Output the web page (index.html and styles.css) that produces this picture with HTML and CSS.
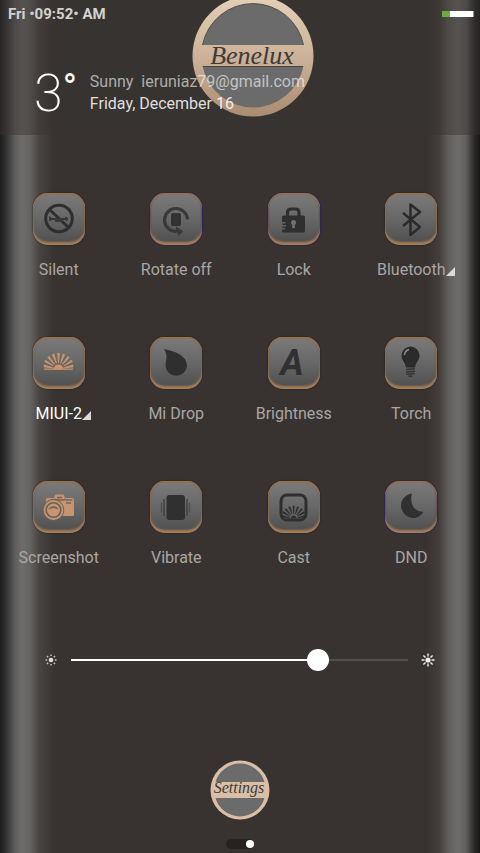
FILE: index.html
```
<!DOCTYPE html>
<html lang="en">
<head>
    <meta charset="UTF-8">
    <meta name="viewport" content="width=device-width, initial-scale=1.0">
    <title>Quick settings</title>
    <link rel="stylesheet" href="styles.css">
</head>
<body>

    <header class="header">
        <svg class="emblem" viewBox="0 0 122 122" aria-label="Benelux">
            <defs>
                <linearGradient id="gold" x1="0" y1="0" x2="0" y2="1">
                    <stop offset="0" stop-color="#e5d1b8"/>
                    <stop offset="0.5" stop-color="#cbb298"/>
                    <stop offset="1" stop-color="#a98c72"/>
                </linearGradient>
            </defs>
            <circle cx="61" cy="61" r="60.5" fill="url(#gold)"/>
            <path d="M10.500 50a51.500 51.500 0 0 1 101 0z" fill="#6b6b6b"/>
            <path d="M10.500 71a51.500 51.500 0 0 0 101 0z" fill="#6b6b6b"/>
            <path d="M10.500 50a51.500 51.500 0 0 1 101 0" fill="none" stroke="#55504c"/>
            <path d="M11 71.500h100" stroke="#4a4644"/>
            <text class="script" x="60" y="69" text-anchor="middle" font-size="26">Benelux</text>
        </svg>

        <div class="status">
            <span>Fri •09:52• AM</span>
            <span class="battery"></span>
        </div>

        <div class="weather">
            <div class="temp">3<span>°</span></div>
            <div class="info">
                <div class="condition">Sunny&nbsp; ieruniaz79@gmail.com</div>
                <div class="date">Friday, December 16</div>
            </div>
        </div>
    </header>

    <main>
        <div class="toggles">
            <button class="toggle">
                <svg class="tile" viewBox="0 0 52 52">
                    <circle cx="26" cy="25.500" r="13.300" fill="none" stroke="#2e2e2e" stroke-width="3"/>
                    <path d="M16 16l20 19" stroke="#2e2e2e" stroke-width="3"/>
                    <path d="M16 23l3 2h13c0-1.500 3-1.500 3 0.800s-2 2.200-3 1.200h-2v2h-8V27h-3l-3 1.500z" fill="#383838"/>
                </svg>
                <span class="label">Silent</span>
            </button>
            <button class="toggle">
                <svg class="tile blue" viewBox="0 0 52 52">
                    <path d="M37.500 26.500A11.500 11.500 0 1 0 26 38.500" fill="none" stroke="#383838" stroke-width="3.200"/>
                    <path d="M26 33.500l7 4.800-4.500 4.700-1-3.500-2 .5z" fill="#383838"/>
                    <rect x="21" y="20" width="10" height="13" rx="1.500" fill="#333"/>
                </svg>
                <span class="label">Rotate off</span>
            </button>
            <button class="toggle">
                <svg class="tile blue" viewBox="0 0 52 52">
                    <path d="M19.500 23v-3.500q0-3.500 3.500-3.500h4.500q3.500 0 3.500 3.500V23" fill="none" stroke="#2f2f2f" stroke-width="3.200"/>
                    <path d="M15.500 22.500h20q1.500 0 1.500 1.500v14q0 1.500-1.500 1.500h-20q-1.500 0-1.500-1.500v-1.500h3v-1.500h-2.500v-1.500h3.500V32H14.500v-1.500h3V29H14v-5q0-1.500 1.500-1.500z" fill="#2f2f2f"/>
                    <circle cx="25.500" cy="29.500" r="2.500" fill="#707070"/>
                    <path d="M24.500 30h2l.5 5h-3z" fill="#707070"/>
                </svg>
                <span class="label">Lock</span>
            </button>
            <button class="toggle">
                <svg class="tile" viewBox="0 0 52 52">
                    <path d="M18 20l17 14-9.500 8V11.500l9.500 7.500-17 14" fill="none" stroke="#2b2b2b" stroke-width="2.500" stroke-linejoin="round"/>
                </svg>
                <span class="label more">Bluetooth</span>
            </button>

            <button class="toggle active">
                <svg class="tile" viewBox="0 0 52 52">
                    <g fill="#c8946f">
                        <path d="M20.500 32.500a5 5 0 0 1 10 0z"/>
                        <path d="M11 31.500h29v1.300H11z"/>
                        <g id="rays">
                            <path id="ray" d="M25 26l-.8-10h2.600l-.8 10z"/>
                            <use href="#ray" transform="rotate(20 25.500 32)"/>
                            <use href="#ray" transform="rotate(40 25.500 32)"/>
                            <use href="#ray" transform="rotate(59 25.500 32)"/>
                            <use href="#ray" transform="rotate(78 25.500 32) translate(0 1)"/>
                            <use href="#ray" transform="rotate(-20 25.500 32)"/>
                            <use href="#ray" transform="rotate(-40 25.500 32)"/>
                            <use href="#ray" transform="rotate(-59 25.500 32)"/>
                            <use href="#ray" transform="rotate(-78 25.500 32) translate(0 1)"/>
                        </g>
                    </g>
                </svg>
                <span class="label more">MIUI-2</span>
            </button>
            <button class="toggle">
                <svg class="tile" viewBox="0 0 52 52">
                    <path d="M14 12c8 2 23 5 23 17a10.800 10.800 0 0 1-21.500 0c0-6 3-10-1.500-17z" fill="#2f2f2f"/>
                </svg>
                <span class="label">Mi Drop</span>
            </button>
            <button class="toggle">
                <svg class="tile" viewBox="0 0 52 52">
                    <text class="auto" x="24" y="38" text-anchor="middle">A</text>
                </svg>
                <span class="label">Brightness</span>
            </button>
            <button class="toggle">
                <svg class="tile" viewBox="0 0 52 52">
                    <path d="M25.500 9.500a9 9 0 0 1 9 9c0 5-3.500 6-4.500 12h-9c-1-6-4.500-7-4.500-12a9 9 0 0 1 9-9z" fill="#2b2b2b"/>
                    <path d="M19.500 18q.5-4.500 4.500-5.500" fill="none" stroke="#8a8a8a" stroke-width="1.500"/>
                    <path d="M21 32.500l9-.7M21 35l9-.7M21.500 37.300l8-.7M23.500 39.300l4-.4" stroke="#333" stroke-width="1.500"/>
                </svg>
                <span class="label">Torch</span>
            </button>

            <button class="toggle">
                <svg class="tile" viewBox="0 0 52 52">
                    <path d="M13 22v-3q0-2 2-2h6l1.500-3.500h8L32 17h7q2 0 2 2v14.500q0 1.500-1.500 1.500H28z" fill="#c8946f"/>
                    <path d="M15 20q5-2 8-1.500l3.500.5h4q1-1 3 0h6M24 16.500h5M33 22h5" fill="none" stroke="#6f655d" stroke-width="1.300"/>
                    <circle cx="20.500" cy="29" r="10.700" fill="#69625c"/>
                    <circle cx="20.500" cy="29" r="9" fill="none" stroke="#c8946f" stroke-width="1.800"/>
                    <circle cx="20.500" cy="29" r="6.500" fill="#c8946f"/>
                    <path d="M15.500 28.500a5.500 5.500 0 0 1 10 0q-5-3-10 0z" fill="#69625c"/>
                </svg>
                <span class="label">Screenshot</span>
            </button>
            <button class="toggle">
                <svg class="tile" viewBox="0 0 52 52">
                    <rect x="16.500" y="14" width="18.500" height="25" rx="3" fill="#303030"/>
                    <path d="M14 18v17M37 18v17" stroke="#3b3b3b" stroke-width="1.300"/>
                    <path d="M11.500 21.500v10M39.500 21.500v10" stroke="#4a4a4a" stroke-width="1.300"/>
                </svg>
                <span class="label">Vibrate</span>
            </button>
            <button class="toggle">
                <svg class="tile" viewBox="0 0 52 52">
                    <rect x="13" y="14" width="25" height="25" rx="6" fill="none" stroke="#2e2e2e" stroke-width="3"/>
                    <g fill="#2e2e2e" transform="translate(5.300 12) scale(.8)">
                        <path d="M22 32a3.500 3.500 0 0 1 7 0z"/>
                        <use href="#rays"/>
                    </g>
                </svg>
                <span class="label">Cast</span>
            </button>
            <button class="toggle">
                <svg class="tile blue" viewBox="0 0 52 52">
                    <path d="M27 12.500c-2.500 9 1 18.500 11.500 18.200C36 35 32.500 37 28.500 37A12.500 12.500 0 0 1 16 24.500c0-6 4.500-11 11-12z" fill="#303030"/>
                </svg>
                <span class="label">DND</span>
            </button>
        </div>

        <div class="brightness">
            <svg class="sun" viewBox="0 0 14 14" fill="#ddd">
                <circle cx="7" cy="7" r="2.300"/>
                <path d="M7 1.500v1.600M7 10.900v1.600M1.500 7h1.600M10.900 7h1.600M3 3l1.200 1.200M9.800 9.800L11 11M3 11l1.200-1.200M9.800 4.200L11 3" stroke="#ccc" stroke-width="1.400"/>
            </svg>
            <input type="range" min="0" max="100" value="75" aria-label="Brightness level">
            <svg class="sun" viewBox="0 0 14 14" fill="#eee">
                <circle cx="7" cy="7" r="2.600"/>
                <path d="M7 .5v3M7 10.500v3M.5 7h3M10.500 7h3M2.400 2.400l2.100 2.100M9.500 9.500l2.100 2.100M2.400 11.600l2.100-2.100M9.500 4.500l2.100-2.100" stroke="#eee" stroke-width="1.400"/>
            </svg>
        </div>
    </main>

    <footer class="footer">
        <button class="settings" aria-label="Settings">
            <svg viewBox="0 0 60 60">
                <circle cx="30" cy="30" r="29.500" fill="#d9bfa6"/>
                <path d="M5.500 22a25.500 25.500 0 0 1 49 0z" fill="#6b6b6b"/>
                <path d="M5.500 38a25.500 25.500 0 0 0 49 0z" fill="#6b6b6b"/>
                <text class="script" x="29" y="33" text-anchor="middle" font-size="16">Settings</text>
            </svg>
        </button>
        <div class="pager"><span></span></div>
    </footer>

</body>
</html>
```
FILE: styles.css
```
* {
    box-sizing: border-box;
}

body {
    margin: 0;
    min-height: 100vh;
    display: flex;
    flex-direction: column;
    font-family: Roboto, sans-serif;
    color: #fff;
    background:
        linear-gradient(to right, #1d1c1c 0, #333232 6px, #5f5e5d 15px, #6e6d6b 22px, #656361 30px, #494542 39px, rgba(56, 51, 48, 0) 54px),
        linear-gradient(to left, #171616 0, #2c2a2a 6px, #605f5e 14px, #6e6d6b 22px, #605e5c 32px, #433d3b 41px, rgba(56, 51, 48, 0) 54px),
        #383330;
}

button {
    padding: 0;
    border: none;
    background: none;
    font-family: inherit;
    cursor: pointer;
}

.header {
    position: relative;
    height: 135px;
    background-color: rgba(56, 51, 48, 0.45);
}

.emblem {
    position: absolute;
    top: -5px;
    left: calc(50% + 13px);
    width: 122px;
    height: 122px;
    transform: translateX(-50%);
}

.script {
    font-family: "Liberation Serif", serif;
    font-style: italic;
    fill: #3e3a38;
}

.status {
    position: relative;
    display: flex;
    align-items: center;
    justify-content: space-between;
    height: 28px;
    padding: 0 6px 0 8px;
    font-size: 15px;
    font-weight: 700;
    color: #d4d2d1;
}

.battery {
    width: 32px;
    height: 6px;
    border-left: 8px solid #6cab3c;
    border-right: 1px solid #6cab3c;
    background-color: #fff;
}

.weather {
    position: relative;
    display: flex;
    align-items: center;
    gap: 13px;
    padding: 34px 0 0 34px;
}

.temp {
    font-size: 52px;
    line-height: 64px;
    font-weight: 200;
}

.temp span {
    font-weight: 400;
    font-size: 38px;
    line-height: 0;
    vertical-align: 10px;
}

.info {
    font-size: 16px;
    line-height: 22px;
    padding-bottom: 2px;
    white-space: nowrap;
}

.condition {
    color: rgba(255, 255, 255, 0.6);
}

.date {
    color: rgba(255, 255, 255, 0.85);
}

.toggles {
    display: grid;
    grid-template-columns: repeat(4, 1fr);
    row-gap: 57px;
    padding: 58px 10px 0 0;
}

.toggle {
    display: flex;
    flex-direction: column;
    align-items: center;
    gap: 15px;
    color: #a9a6a4;
}

.toggle.active {
    color: #fff;
}

.tile {
    width: 52px;
    height: 52px;
    border-radius: 15px;
    background: linear-gradient(#7b7b7b, #676767 50%, #4d4d4d);
    box-shadow: inset 0 2px 1px #94714f, inset 0 -3px 2px #a47c58, inset 0 0 1px 1px #76604b, 0 0 2px #1d1b1a;
}

.tile.blue {
    box-shadow: inset 0 2px 1px #94714f, inset 0 -3px 2px #a47c58, inset 0 0 1px 1px #4a3d5a, 0 0 1px 1px #30264f;
}

.auto {
    font-family: Roboto, sans-serif;
    font-size: 36px;
    font-weight: 700;
    font-style: italic;
    fill: #303030;
}

.label {
    position: relative;
    font-size: 16px;
    line-height: 20px;
    white-space: nowrap;
}

/* corner mark for toggles that open a list */
.more::after {
    content: "";
    position: absolute;
    left: 100%;
    bottom: 4px;
    border-left: 9px solid transparent;
    border-bottom: 9px solid #dcdad9;
}

.brightness {
    display: flex;
    align-items: center;
    gap: 13px;
    padding: 81px 45px 0 44px;
}

.sun {
    flex: none;
    width: 14px;
    height: 14px;
}

input[type="range"] {
    -webkit-appearance: none;
    appearance: none;
    flex: 1;
    min-width: 0;
    height: 22px;
    margin: 0;
    background: linear-gradient(to right, #fff 75%, #55504d 75%) center / 100% 2px no-repeat;
}

input[type="range"]::-webkit-slider-thumb {
    -webkit-appearance: none;
    width: 22px;
    height: 22px;
    border-radius: 50%;
    background-color: #fff;
}

.footer {
    display: flex;
    flex-direction: column;
    align-items: center;
    gap: 19px;
    margin-top: auto;
    padding: 20px 0 4px;
}

.settings,
.settings svg {
    display: block;
    width: 60px;
    height: 60px;
}

.pager {
    display: flex;
    justify-content: flex-end;
    width: 28px;
    padding: 1px 0;
    border-radius: 5px;
    background-color: #262220;
}

.pager span {
    width: 8px;
    height: 8px;
    border-radius: 50%;
    background-color: #fff;
}
```
